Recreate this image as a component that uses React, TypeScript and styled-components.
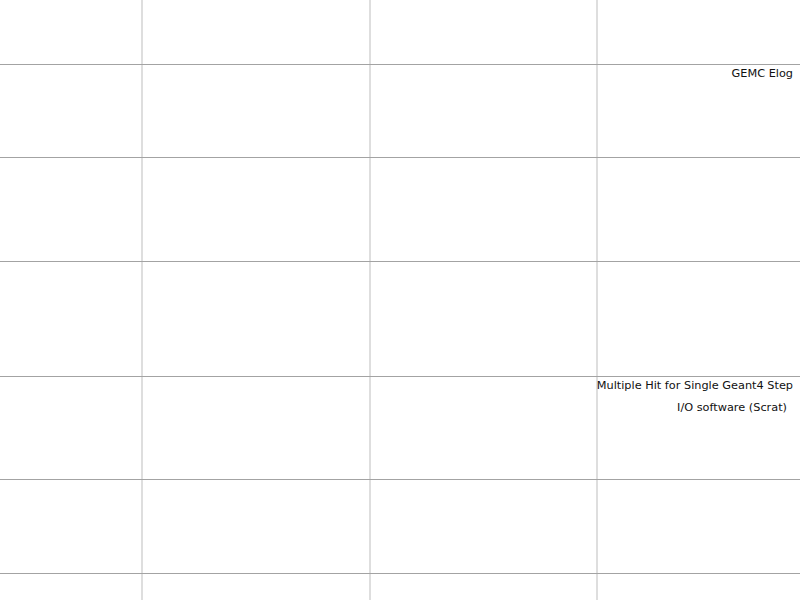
import React from "react";
import styled, { createGlobalStyle } from "styled-components";

const Global = createGlobalStyle`
  html, body { margin: 0; padding: 0; background: #ffffff; }
  body { font-family: "DejaVu Sans", "Liberation Sans", sans-serif; overflow: hidden; }
`;

const Table = styled.div`
  display: flex;
  flex-direction: column;
  width: 800px;
  height: 600px;
  overflow: hidden;
`;

const Row = styled.div<{ $h: number; $last?: boolean }>`
  display: grid;
  grid-template-columns: 141px 228px 227px 1fr;
  flex: 0 0 ${(p) => p.$h}px;
  box-sizing: border-box;
  border-bottom: ${(p) => (p.$last ? "none" : "1px solid #a3a3a3")};
`;

const Cell = styled.div<{ $first?: boolean }>`
  box-sizing: border-box;
  border-left: ${(p) => (p.$first ? "none" : "2px solid #dedede")};
  min-width: 0;
`;

const LabelCell = styled(Cell)`
  display: flex;
  flex-direction: column;
  align-items: flex-end;
  gap: 6px;
  padding: 1px 7px 0 0;
  font-size: 11.3px;
  line-height: 16px;
  color: #111111;
  white-space: nowrap;
`;

const Line = styled.span<{ $trail?: number }>`
  display: block;
  margin-right: ${(p) => p.$trail ?? 0}px;
`;

const rows: { h: number; lines: { text: string; trail?: number }[] }[] = [
  { h: 65, lines: [] },
  { h: 93, lines: [{ text: "GEMC Elog" }] },
  { h: 104, lines: [] },
  { h: 115, lines: [] },
  { h: 103, lines: [{ text: "Multiple Hit for Single Geant4 Step" }, { text: "I/O software (Scrat)", trail: 6 }] },
  { h: 94, lines: [] },
  { h: 60, lines: [] },
];

export default function App() {
  return (
    <>
      <Global />
      <Table>
        {rows.map((r, i) => (
          <Row key={i} $h={r.h} $last={i === rows.length - 1}>
            <Cell $first />
            <Cell />
            <Cell />
            <LabelCell>
              {r.lines.map((l, j) => (
                <Line key={j} $trail={l.trail}>
                  {l.text}
                </Line>
              ))}
            </LabelCell>
          </Row>
        ))}
      </Table>
    </>
  );
}
